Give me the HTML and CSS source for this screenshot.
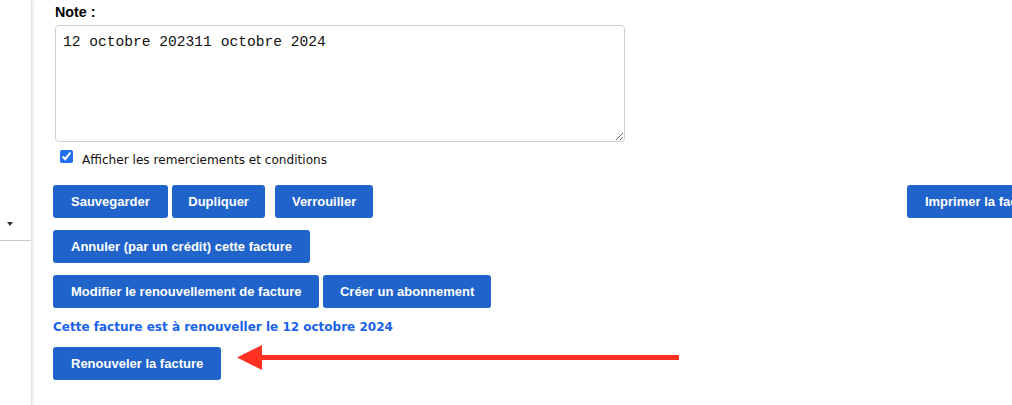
FILE: index.html
```html
<!DOCTYPE html>
<html lang="fr">
<head>
<meta charset="utf-8">
<title>Facture</title>
<link rel="stylesheet" href="styles.css">
</head>
<body>
<div class="page">
  <aside class="sidebar">
    <div class="side-select"><span class="caret"></span></div>
  </aside>
  <main class="main">
    <label class="note-label" for="note">Note :</label>
    <textarea id="note" class="note">12 octobre 202311 octobre 2024</textarea>
    <label class="check-row"><input type="checkbox" checked class="check"><span class="check-text">Afficher les remerciements et conditions</span></label>
    <div class="btn-row row-wide">
      <button class="btn">Sauvegarder</button>
      <button class="btn btn-tight">Dupliquer</button>
      <button class="btn btn-tight btn-sep">Verrouiller</button>
      <button class="btn btn-right">Imprimer la facture</button>
    </div>
    <div class="btn-row">
      <button class="btn">Annuler (par un crédit) cette facture</button>
    </div>
    <div class="btn-row">
      <button class="btn">Modifier le renouvellement de facture</button>
      <button class="btn btn-tight">Créer un abonnement</button>
    </div>
    <p class="renew-info">Cette facture est à renouveller le 12 octobre 2024</p>
    <div class="btn-row renew-row">
      <button class="btn">Renouveler la facture</button>
      <svg class="arrow" width="450" height="30" viewBox="0 0 450 30" aria-hidden="true">
        <rect x="20" y="11" width="422" height="5" fill="#ff3123"/>
        <polygon points="0,13.5 25,1 25,26" fill="#ff3123"/>
      </svg>
    </div>
  </main>
</div>
</body>
</html>
```

FILE: styles.css
```css
html, body {
  margin: 0;
  padding: 0;
  background: #ffffff;
  overflow: hidden;
}
body {
  width: 1012px;
  height: 405px;
  font-family: "Liberation Sans", Arial, sans-serif;
}
.page {
  display: flex;
  height: 405px;
}
.sidebar {
  width: 31px;
  flex: none;
  background: #ffffff;
  border-right: 1px solid #e2e2e2;
  box-shadow: 1px 0 3px rgba(0, 0, 0, 0.10);
  position: relative;
  z-index: 1;
}
.side-select {
  margin-top: 216px;
  height: 24px;
  border-bottom: 1px solid #c8c8c8;
  position: relative;
}
.caret {
  position: absolute;
  left: 7px;
  top: 6px;
  width: 0;
  height: 0;
  border-left: 3.5px solid transparent;
  border-right: 3.5px solid transparent;
  border-top: 4px solid #333333;
}
.main {
  flex: 1;
  min-width: 0;
  padding: 4px 0 0 21px;
  display: flex;
  flex-direction: column;
  align-items: flex-start;
}
.note-label {
  font-weight: bold;
  font-size: 14.3px;
  color: #000;
  margin-left: 2px;
  line-height: 16px;
}
.note {
  margin: 5px 0 0 2px;
  width: 570px;
  height: 117px;
  box-sizing: border-box;
  border: 1px solid #cfcfcf;
  border-radius: 4px;
  padding: 7px 7px;
  font-family: "Liberation Mono", "Courier New", monospace;
  font-size: 14.6px;
  line-height: 18px;
  color: #111;
  resize: vertical;
}
.check-row {
  display: flex;
  align-items: flex-start;
  margin: 8px 0 0 7px;
  font-family: "DejaVu Sans", Verdana, sans-serif;
  font-size: 12.1px;
  color: #111;
  height: 18px;
}
.check {
  width: 13px;
  height: 13px;
  margin: 0 9px 0 0;
  accent-color: #1f6ff0;
}
.check-text {
  padding-top: 2px;
  line-height: 16px;
}
.btn-row {
  display: flex;
  gap: 4px;
  margin-top: 12px;
}
.row-wide {
  width: 1007px;
  margin-top: 17px;
}
.btn {
  font-family: "Liberation Sans", Arial, sans-serif;
  font-weight: bold;
  font-size: 13px;
  line-height: 15px;
  color: #ffffff;
  background: #1f63cb;
  border: none;
  border-radius: 3px;
  padding: 9px 18px;
  height: 33px;
  cursor: pointer;
}
.btn-tight {
  padding: 9px 16.5px;
}
.btn-sep {
  margin-left: 6px;
}
.btn-right {
  margin-left: auto;
}
.renew-info {
  margin: 11px 0 0 0;
  font-family: "DejaVu Sans", Verdana, sans-serif;
  font-weight: bold;
  font-size: 12px;
  line-height: 16px;
  color: #1a62ea;
}
.renew-row {
  margin-top: 12px;
  position: relative;
}
.arrow {
  position: absolute;
  left: 184px;
  top: -3px;
}
```
